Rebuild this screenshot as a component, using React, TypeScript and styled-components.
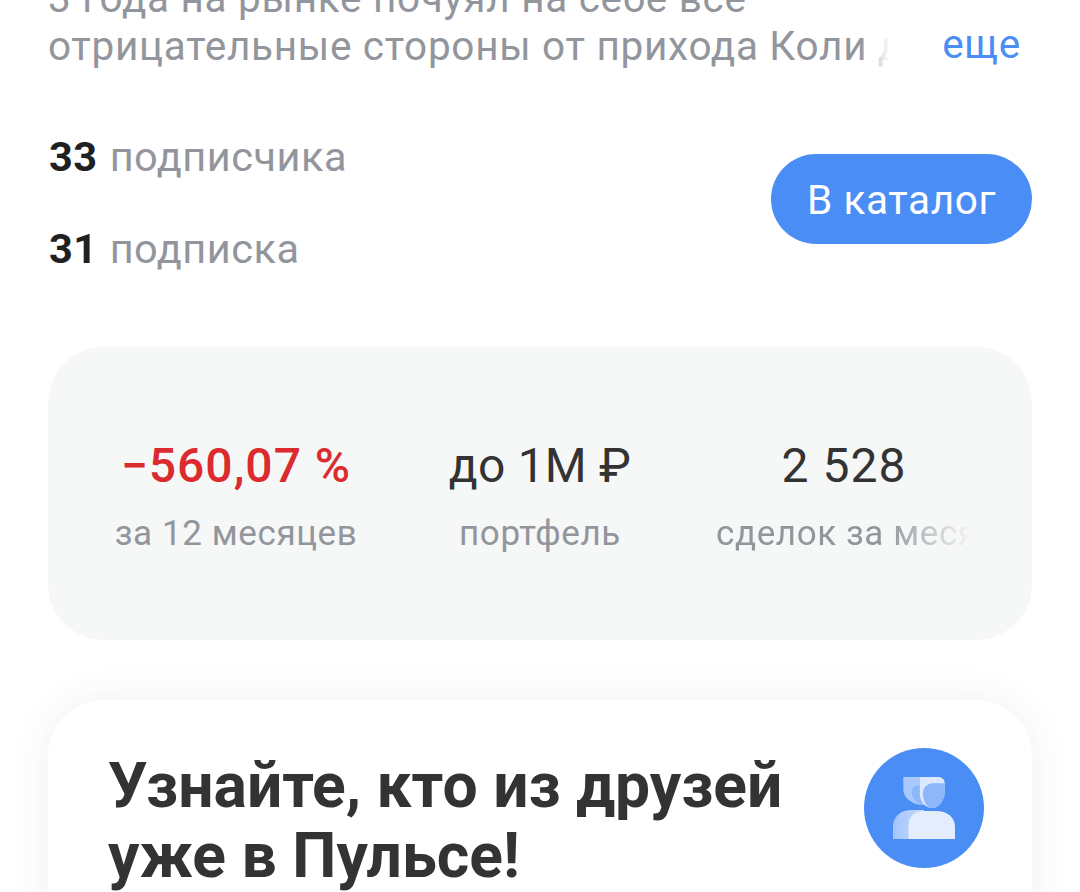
import React from 'react'
import styled, { createGlobalStyle } from 'styled-components'

const GlobalStyle = createGlobalStyle`
  html, body {
    margin: 0;
    background: white;
  }
  body {
    font-family: Roboto, "Noto Sans", sans-serif;
  }
`

const Page = styled.div`
  width: 1080px;
  height: 892px;
  overflow: hidden;
  box-sizing: border-box;
  padding: 0 48px;
  background: white;
`

const About = styled.div`
  position: relative;
  margin-top: -26px;
  height: 98px;
  font-size: 40.5px;
  line-height: 48px;
  letter-spacing: 0.7px;
  color: #92969c;
  white-space: nowrap;
  overflow: hidden;
`

const MoreFade = styled.div`
  position: absolute;
  right: 0;
  bottom: 2px;
  height: 48px;
  width: 172px;
  display: flex;
  justify-content: flex-end;
  background: linear-gradient(90deg, rgba(255,255,255,0) 0, white 30px);
  padding-right: 11px;
  box-sizing: border-box;
`

const More = styled.span`
  color: #4a8ef5;
  margin-top: -2px;
`

const FollowRow = styled.div`
  display: flex;
  justify-content: space-between;
  align-items: center;
  margin-top: 54px;
`

const FollowList = styled.div`
  display: flex;
  flex-direction: column;
  gap: 46px;
  padding-top: 8px;
  padding-left: 1px;
`

const Follow = styled.div`
  font-size: 41.5px;
  line-height: 46px;
  letter-spacing: 0.5px;
  color: #92969c;
`

const FollowCount = styled.b`
  font-weight: 700;
  color: #1f2022;
  margin-right: 12px;
`

const CatalogButton = styled.button`
  width: 261px;
  height: 90px;
  border: 0;
  border-radius: 45px;
  padding: 2px 0 0;
  background: #4a8ef5;
  color: white;
  font-family: inherit;
  font-size: 40.5px;
  letter-spacing: 0.6px;
`

const StatsCard = styled.div`
  margin-top: 75px;
  height: 293px;
  box-sizing: border-box;
  padding-top: 6px;
  border-radius: 56px;
  background: #f6f7f7;
  display: grid;
  grid-template-columns: 376px 232px 376px;
  align-items: center;
`

const Stat = styled.div`
  position: relative;
  text-align: center;
  overflow: hidden;
  white-space: nowrap;
`

const StatValue = styled.div<{ $negative?: boolean; $tight?: boolean }>`
  font-size: 48px;
  line-height: 56px;
  letter-spacing: ${(p) => (p.$tight ? '0.2px' : '1px')};
  font-weight: ${(p) => (p.$negative ? 500 : 400)};
  color: ${(p) => (p.$negative ? '#dc2b2f' : '#333333')};
`

const StatLabel = styled.div`
  margin-top: 19px;
  font-size: 35px;
  line-height: 42px;
  letter-spacing: 0.6px;
  color: #92969c;
`

const LabelClip = styled.div`
  width: 256px;
  margin: 19px auto 0;
  overflow: hidden;
  -webkit-mask-image: linear-gradient(90deg, black 170px, transparent 256px);
  mask-image: linear-gradient(90deg, black 170px, transparent 256px);

  ${StatLabel} {
    margin-top: 0;
    text-align: left;
  }
`

const PromoCard = styled.div`
  margin-top: 60px;
  height: 300px;
  box-sizing: border-box;
  padding: 48px 48px 0 60px;
  border-radius: 56px;
  background: white;
  box-shadow: 0 0 40px rgba(60, 70, 90, 0.08);
  display: flex;
  justify-content: space-between;
  align-items: flex-start;
`

const PromoTitle = styled.div`
  padding-top: 3px;
  font-size: 62.4px;
  line-height: 70px;
  font-weight: 700;
  color: #333333;
`

const PromoIcon = styled.div`
  flex: none;
  width: 120px;
  height: 120px;
  border-radius: 50%;
  background: #4a8ef5;
  display: flex;
  align-items: center;
  justify-content: center;
`

const FriendsIcon = () => (
  <svg width="62" height="62" viewBox="0 0 60 60">
    <defs>
      <linearGradient id="backBody" x1="0" y1="0" x2="1" y2="0">
        <stop offset="0" stopColor="#a4c5fb" />
        <stop offset="1" stopColor="#c4daff" />
      </linearGradient>
    </defs>
    <path d="M10 0H30V27C18 27 10 20 10 12Z" fill="#a9c8fb" />
    <path d="M18 14C18 10 21 8 26 8H30V27C23 26 18 21 18 14Z" fill="#8db7fa" />
    <path d="M0 60V48C0 39 7 32 18 32H30V60Z" fill="url(#backBody)" />
    <path d="M26 0H44C48 0 50 3 50 6V14C50 23 44 30 38 30C31 30 26 24 26 16Z" fill="#dbe8fe" />
    <path d="M29 16C29 10 33 6 39 6H50V14C50 23 44 30 38 30C33 30 29 24 29 16Z" fill="#8db7fa" />
    <path d="M15 60V46C15 38 22 33 30 33H42C52 33 60 39 60 48V60Z" fill="#e3edfe" />
  </svg>
)

const App = () => {
  return (
    <Page>
      <GlobalStyle />
      <About>
        3 года на рынке почуял на себе все
        <br />
        отрицательные стороны от прихода Коли для
        <MoreFade>
          <More>еще</More>
        </MoreFade>
      </About>
      <FollowRow>
        <FollowList>
          <Follow>
            <FollowCount>33</FollowCount>подписчика
          </Follow>
          <Follow>
            <FollowCount>31</FollowCount>подписка
          </Follow>
        </FollowList>
        <CatalogButton>В каталог</CatalogButton>
      </FollowRow>
      <StatsCard>
        <Stat>
          <StatValue $negative>−560,07 %</StatValue>
          <StatLabel>за 12 месяцев</StatLabel>
        </Stat>
        <Stat>
          <StatValue $tight>до 1М ₽</StatValue>
          <StatLabel>портфель</StatLabel>
        </Stat>
        <Stat>
          <StatValue>2 528</StatValue>
          <LabelClip>
            <StatLabel>сделок за месяц</StatLabel>
          </LabelClip>
        </Stat>
      </StatsCard>
      <PromoCard>
        <PromoTitle>
          Узнайте, кто из друзей
          <br />
          уже в Пульсе!
        </PromoTitle>
        <PromoIcon>
          <FriendsIcon />
        </PromoIcon>
      </PromoCard>
    </Page>
  )
}

export default App
